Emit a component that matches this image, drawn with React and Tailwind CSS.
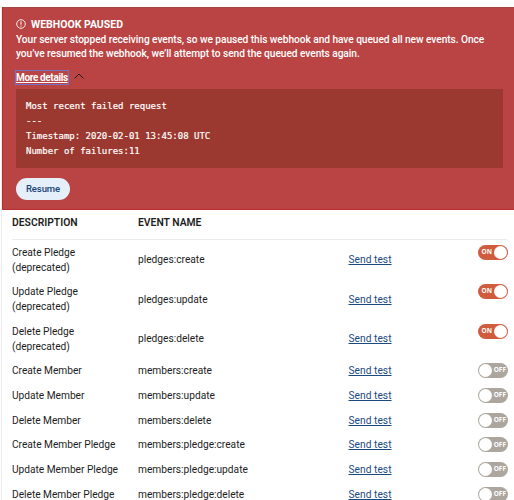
import React, { useState } from "react";

const initialEvents = [
  { label: "Create Pledge", deprecated: true, name: "pledges:create", on: true },
  { label: "Update Pledge", deprecated: true, name: "pledges:update", on: true },
  { label: "Delete Pledge", deprecated: true, name: "pledges:delete", on: true },
  { label: "Create Member", name: "members:create", on: false },
  { label: "Update Member", name: "members:update", on: false },
  { label: "Delete Member", name: "members:delete", on: false },
  { label: "Create Member Pledge", name: "members:pledge:create", on: false },
  { label: "Update Member Pledge", name: "members:pledge:update", on: false },
  { label: "Delete Member Pledge", name: "members:pledge:delete", on: false },
];

function Toggle({ on, onClick }) {
  return (
    <button
      onClick={onClick}
      className={
        on
          ? "flex h-[15px] w-[30px] items-center justify-between rounded-full bg-[#d15b3d] p-px pl-[3.5px]"
          : "flex h-[15px] w-[30px] flex-row-reverse items-center justify-between rounded-full bg-[#aca69e] p-px pr-[2px]"
      }
    >
      <span className="font-['Open_Sans',sans-serif] text-[6.5px] leading-none font-bold text-white">
        {on ? "ON" : "OFF"}
      </span>
      <span className="size-[13px] rounded-full bg-white" />
    </button>
  );
}

function Banner() {
  const [open, setOpen] = useState(true);

  return (
    <div className="h-[203px] border-t border-b border-l border-t-[#aa4545] border-b-[#bd2d2d] border-l-[#bd2d2d] bg-[#b94443] pt-[9px] pr-[11px] pl-[13px] text-white">
      <div className="flex h-[15px] items-center">
        <svg className="mr-[5px] mb-[2px] size-[10px]" viewBox="0 0 10 10" fill="none" stroke="currentColor">
          <circle cx="5" cy="5" r="4.3" strokeWidth="0.9" />
          <path d="M5 2.3v3.4M5 6.5v1.2" />
        </svg>
        <h2 className="text-[10.5px] font-bold">WEBHOOK PAUSED</h2>
      </div>
      <p className="pt-[0.6px] text-[10.2px] leading-[14.85px] font-medium tracking-[-0.06px]">
        Your server stopped receiving events, so we paused this webhook and have queued all new events. Once
        <br />
        you’ve resumed the webhook, we’ll attempt to send the queued events again.
      </p>

      <button onClick={() => setOpen(!open)} className="mt-[8.7px] flex h-[13px] items-center">
        <span className="h-[13px] text-[10px] leading-[14px] font-bold tracking-[-0.36px] underline outline outline-[#7272c8]">
          More details
        </span>
        <svg className="mb-[2px] ml-[6px] h-[6px] w-[10px]" viewBox="0 0 10 6" fill="none" stroke="#241e20">
          <path d={open ? "M0.5 5.5 5 1l4.5 4.5" : "M0.5 0.5 5 5 9.5 0.5"} />
        </svg>
      </button>

      {open && (
        <pre className="mt-[5px] h-[79px] bg-[#9b382f] px-[10px] pt-[10px] font-['DejaVu_Sans_Mono',monospace] text-[9px] leading-[14.85px] [-webkit-text-stroke:0.2px_white]">
          {"Most recent failed request\n---\nTimestamp: 2020-02-01 13:45:08 UTC\nNumber of failures:11"}
        </pre>
      )}

      <button className="mt-[10px] h-[22px] w-[54px] rounded-full bg-[#e5eff9] pt-px text-[9.5px] font-medium tracking-[-0.1px] text-[#164276]">
        Resume
      </button>
    </div>
  );
}

export default function App() {
  const [events, setEvents] = useState(initialEvents);

  const toggle = (index) => {
    setEvents(events.map((e, i) => (i === index ? { ...e, on: !e.on } : e)));
  };

  return (
    <div className="h-screen overflow-hidden bg-white pt-[7px] pl-px font-['Roboto',sans-serif] text-[#1d1d1d]">
      <div className="min-h-full border-l border-[#ececec]">
        <Banner />

        {/* Event table */}
        <div className="mr-[6px] ml-[10px] text-[10.2px] leading-[14.85px]">
          <div className="mr-px flex h-[30px] border-b border-[#ececec] pt-[5.5px] text-[10.35px] font-semibold">
            <div className="w-[126px]">DESCRIPTION</div>
            <div>EVENT NAME</div>
          </div>
          {events.map((event, index) => (
            <div key={event.name} className="flex items-center pt-[5.7px] pb-[4.15px]">
              <div className="w-[126px] tracking-[-0.02px]">
                {event.label}
                {event.deprecated && <div>(deprecated)</div>}
              </div>
              <div className="w-[210.5px]">{event.name}</div>
              <a href="#" className="tracking-[0.04px] text-[#1b4a80] underline">
                Send test
              </a>
              <div className="-mt-[1px] ml-auto h-[14.85px] self-start">
                <Toggle on={event.on} onClick={() => toggle(index)} />
              </div>
            </div>
          ))}
        </div>
      </div>
    </div>
  );
}
